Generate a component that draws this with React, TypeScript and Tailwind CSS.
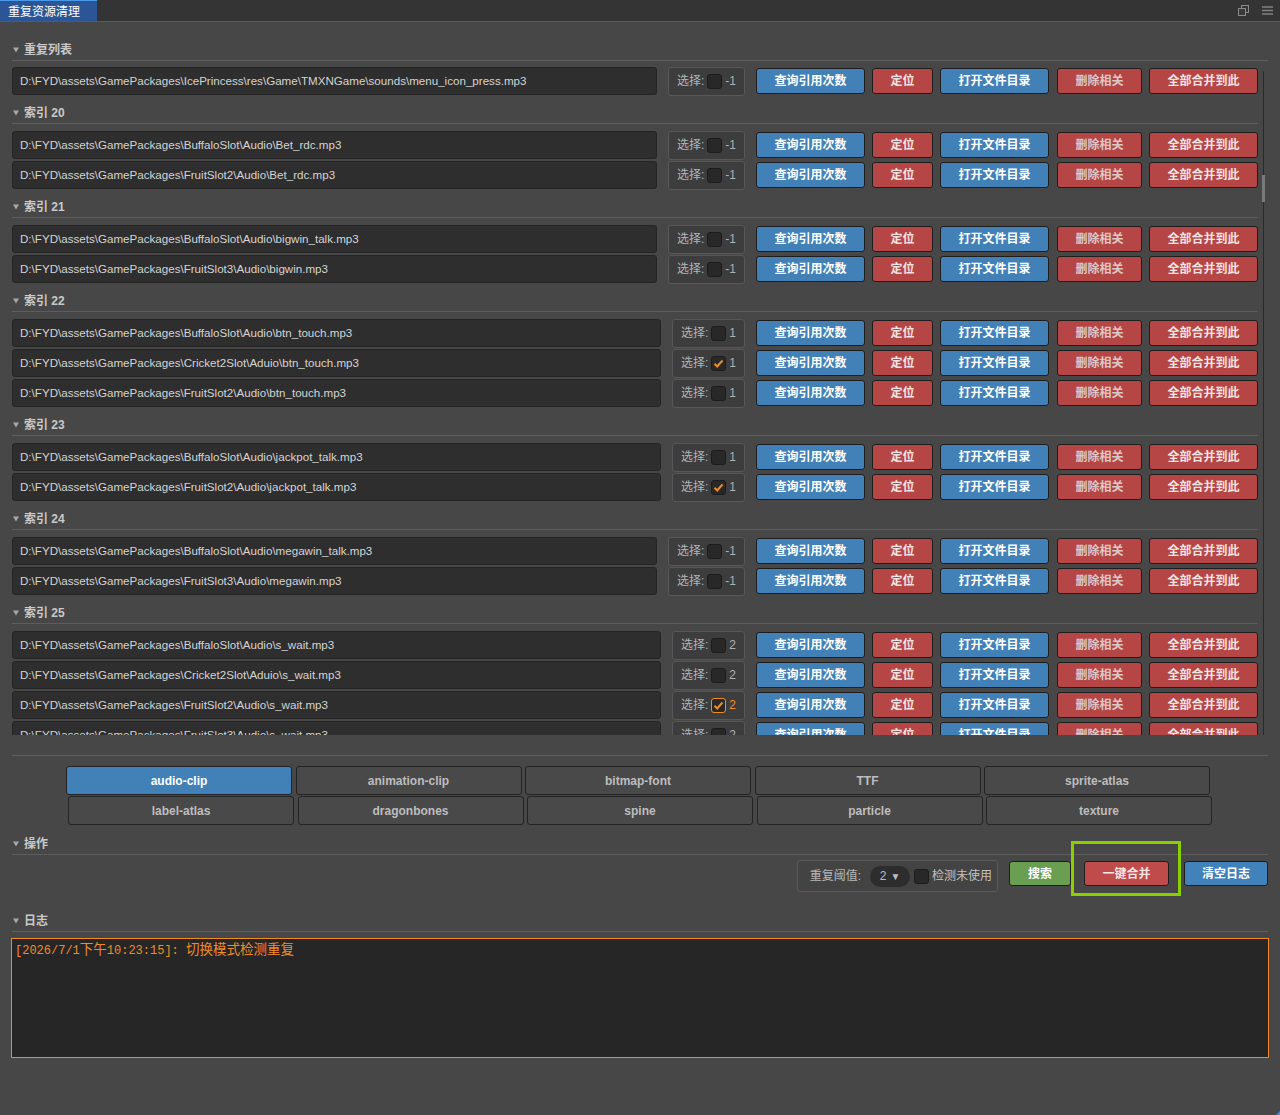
import React from "react";

type Item = { path: string; value: string; checked?: boolean; focus?: boolean };
type Group = { title?: string; items: Item[] };

const base = "D:\\FYD\\assets\\GamePackages\\";

const groups: Group[] = [
  { items: [{ path: base + "IcePrincess\\res\\Game\\TMXNGame\\sounds\\menu_icon_press.mp3", value: "-1" }] },
  {
    title: "索引 20",
    items: [
      { path: base + "BuffaloSlot\\Audio\\Bet_rdc.mp3", value: "-1" },
      { path: base + "FruitSlot2\\Audio\\Bet_rdc.mp3", value: "-1" },
    ],
  },
  {
    title: "索引 21",
    items: [
      { path: base + "BuffaloSlot\\Audio\\bigwin_talk.mp3", value: "-1" },
      { path: base + "FruitSlot3\\Audio\\bigwin.mp3", value: "-1" },
    ],
  },
  {
    title: "索引 22",
    items: [
      { path: base + "BuffaloSlot\\Audio\\btn_touch.mp3", value: "1" },
      { path: base + "Cricket2Slot\\Aduio\\btn_touch.mp3", value: "1", checked: true },
      { path: base + "FruitSlot2\\Audio\\btn_touch.mp3", value: "1" },
    ],
  },
  {
    title: "索引 23",
    items: [
      { path: base + "BuffaloSlot\\Audio\\jackpot_talk.mp3", value: "1" },
      { path: base + "FruitSlot2\\Audio\\jackpot_talk.mp3", value: "1", checked: true },
    ],
  },
  {
    title: "索引 24",
    items: [
      { path: base + "BuffaloSlot\\Audio\\megawin_talk.mp3", value: "-1" },
      { path: base + "FruitSlot3\\Audio\\megawin.mp3", value: "-1" },
    ],
  },
  {
    title: "索引 25",
    items: [
      { path: base + "BuffaloSlot\\Audio\\s_wait.mp3", value: "2" },
      { path: base + "Cricket2Slot\\Aduio\\s_wait.mp3", value: "2" },
      { path: base + "FruitSlot2\\Audio\\s_wait.mp3", value: "2", checked: true, focus: true },
      { path: base + "FruitSlot3\\Audio\\s_wait.mp3", value: "2" },
    ],
  },
];

const tabsTop = ["audio-clip", "animation-clip", "bitmap-font", "TTF", "sprite-atlas"];
const tabsBottom = ["label-atlas", "dragonbones", "spine", "particle", "texture"];

function Tri() {
  return (
    <svg width="6" height="6" viewBox="0 0 6 6">
      <path d="M0 0.5 H6 L3 5.5 Z" fill="#a8a8a8" />
    </svg>
  );
}

function Header({ title, mb = true }: { title: string; mb?: boolean }) {
  return (
    <div
      className={`flex items-center gap-[5px] border-b border-[#5d5d5d] pb-[2px] pl-[1px] pt-[9px] text-[12px] font-bold leading-[16px] text-[#c9c9c9] ${
        mb ? "mb-[6px]" : ""
      }`}
    >
      <Tri />
      <span>{title}</span>
    </div>
  );
}

function Check({ checked, focus }: { checked?: boolean; focus?: boolean }) {
  return (
    <span
      className={`mx-[3px] flex h-[15px] w-[15px] items-center justify-center rounded-[3px] border bg-[#282828] ${
        focus ? "border-[#f08c28]" : "border-[#1c1c1c]"
      }`}
    >
      {checked && (
        <svg width="11" height="11" viewBox="0 0 11 11">
          <path d="M1.5 5.8 L4.2 8.5 L9.5 2.5" fill="none" stroke="#f08c28" strokeWidth="2" />
        </svg>
      )}
    </span>
  );
}

function Btn({ label, w, tone }: { label: string; w: string; tone: "blue" | "red" | "pink" }) {
  const cls =
    tone === "blue"
      ? "bg-[#4281b8] text-white"
      : tone === "red"
      ? "bg-[#b64646] text-[#f3e3e3]"
      : "bg-[#b64646] text-[#dcc6c6]";
  return (
    <div
      className={`flex h-[26px] items-center justify-center rounded-[3px] border border-[#1d1d1d] text-[12px] font-bold ${w} ${cls}`}
    >
      {label}
    </div>
  );
}

function Row({ item }: { item: Item }) {
  return (
    <div className="flex h-[30px] items-center">
      <div className="flex h-[28px] flex-1 items-center overflow-hidden whitespace-nowrap rounded-[3px] border border-[#242424] bg-[#2e2e2e] pl-[7px] text-[11.6px] text-[#d4d4d4]">
        {item.path}
      </div>
      <div className="ml-[11px] flex h-[29px] items-center rounded-[3px] border border-[#585858] bg-[#3d3d3d] pl-[8px] pr-[8px] text-[12px] text-[#b4b4b4]">
        <span>选择:</span>
        <Check checked={item.checked} focus={item.focus} />
        <span className={item.focus ? "text-[#f08c28]" : "text-[#b0b0b0]"}>{item.value}</span>
      </div>
      <div className="ml-[11px] flex gap-[7px]">
        <Btn label="查询引用次数" w="w-[109px]" tone="blue" />
        <Btn label="定位" w="w-[61px]" tone="red" />
        <Btn label="打开文件目录" w="w-[109px]" tone="blue" />
        <div className="ml-[1px]">
          <Btn label="删除相关" w="w-[85px]" tone="pink" />
        </div>
        <Btn label="全部合并到此" w="w-[109px]" tone="red" />
      </div>
    </div>
  );
}

function Tab({ label, active }: { label: string; active?: boolean }) {
  return (
    <div
      className={`flex h-[29px] w-[226px] items-center justify-center rounded-[3px] border border-[#232323] text-[12px] font-bold ${
        active ? "bg-[#4281b8] text-white" : "bg-[#494949] text-[#bdbdbd]"
      }`}
    >
      {label}
    </div>
  );
}

function Mono({ children }: { children: React.ReactNode }) {
  return <span className="font-['Liberation_Mono',monospace] text-[12px]">{children}</span>;
}

function Cjk({ children }: { children: React.ReactNode }) {
  return <span className="font-['Noto_Sans_CJK_SC',sans-serif] text-[13.5px]">{children}</span>;
}

export default function App() {
  return (
    <div className="relative flex h-[1115px] w-[1280px] flex-col overflow-hidden bg-[#474747] font-['Liberation_Sans','Noto_Sans_CJK_SC',sans-serif]">
      <div className="flex h-[22px] items-stretch border-b border-[#5a5a5a] bg-[#343434]">
        <div className="flex w-[97px] items-center border-t border-[#4a98ec] bg-[#2b5594] pl-[8px] pt-[2px] text-[12px] text-white">
          重复资源清理
        </div>
        <div className="ml-auto flex items-center gap-[13px] pr-[7px]">
          <svg width="11" height="11" viewBox="0 0 11 11">
            <rect x="3.5" y="0.5" width="7" height="7" fill="none" stroke="#8a8a8a" />
            <rect x="0.5" y="3.5" width="7" height="7" fill="#3a3a3a" stroke="#8a8a8a" />
          </svg>
          <svg width="11" height="9" viewBox="0 0 11 9">
            <path d="M0 1 H11 M0 4.5 H11 M0 8 H11" stroke="#808080" strokeWidth="1.4" />
          </svg>
        </div>
      </div>

      <div className="flex flex-col px-[12px] pt-[11px]">
        <Header title="重复列表" mb={false} />

        <div className="flex h-[674px] overflow-hidden">
          <div className="flex-1 pt-[5px]">
            {groups.map((g, i) => (
              <div key={i}>
                {g.title && <Header title={g.title} />}
                {g.items.map((it) => (
                  <Row key={it.path} item={it} />
                ))}
              </div>
            ))}
          </div>
          <div className="relative flex w-[10px] justify-center">
            <div className="mt-[10px] h-full w-[1px] bg-[#2a2a2a]" />
            <div className="absolute left-[4px] top-[114px] h-[27px] w-[3px] bg-[#7a7a7a]" />
          </div>
        </div>

        <div className="mt-[20px] border-t border-[#5d5d5d] pt-[10px]">
          <div className="flex gap-[3.5px] pl-[54px]">
            {tabsTop.map((t, i) => (
              <Tab key={t} label={t} active={i === 0} />
            ))}
          </div>
          <div className="mt-[1px] flex gap-[3.5px] pl-[56px]">
            {tabsBottom.map((t) => (
              <Tab key={t} label={t} />
            ))}
          </div>
        </div>

        <div className="mt-[2px]">
          <Header title="操作" mb={false} />
        </div>

        <div className="mt-[5px] flex items-start justify-end">
          <div className="flex h-[32px] items-center rounded-[3px] border border-[#5a5a5a] bg-[#434343] pl-[12px] pr-[5px] text-[12px] text-[#b8b8b8]">
            <span>重复阈值:</span>
            <span className="ml-[9px] flex h-[21px] w-[40px] items-center justify-center gap-[4px] rounded-full bg-[#2d2d2d] text-[#bdbdbd]">
              <span>2</span>
              <span className="text-[10px]">▼</span>
            </span>
            <span className="ml-[4px] h-[15px] w-[15px] rounded-[3px] border border-[#1c1c1c] bg-[#282828]" />
            <span className="ml-[3px] text-[#c2c2c2]">检测未使用</span>
          </div>
          <div className="ml-[11px] mt-[1px] flex h-[25px] w-[62px] items-center justify-center rounded-[3px] border border-[#1d1d1d] bg-[#6a9e50] text-[12px] font-bold text-white">
            搜索
          </div>
          <div className="relative ml-[13px] mt-[1px]">
            <div className="flex h-[25px] w-[85px] items-center justify-center rounded-[3px] border border-[#1d1d1d] bg-[#bf4b4b] text-[12px] font-bold text-[#f5e6e6]">
              一键合并
            </div>
            <div className="pointer-events-none absolute -bottom-[10px] -left-[13px] -right-[12px] -top-[20px] border-[3px] border-[#8ccf00]" />
          </div>
          <div className="ml-[15px] mt-[1px] flex h-[25px] w-[84px] items-center justify-center rounded-[3px] border border-[#1d1d1d] bg-[#4282bb] text-[12px] font-bold text-white">
            清空日志
          </div>
        </div>

        <div className="mt-[12px]">
          <Header title="日志" />
        </div>

        <div className="-mx-[1px] h-[120px] border border-[#f08c28] bg-[#262626] pl-[3px] leading-[18px] text-[#f08c28]">
          <Mono>[2026/7/1</Mono>
          <Cjk>下午</Cjk>
          <Mono>10:23:15]: </Mono>
          <Cjk>切换模式检测重复</Cjk>
        </div>
      </div>

      <div className="absolute bottom-0 right-0 h-0 w-0 border-b-[4px] border-l-[4px] border-b-[#3a8ee6] border-l-transparent" />
    </div>
  );
}
